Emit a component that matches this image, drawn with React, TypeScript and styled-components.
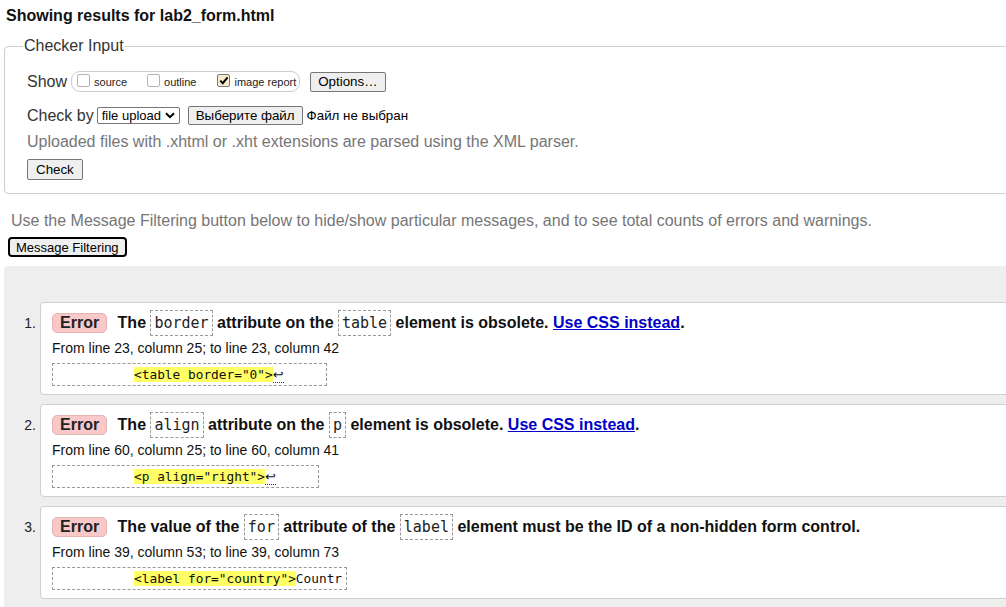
import React from "react";
import styled, { createGlobalStyle } from "styled-components";

const Global = createGlobalStyle`
  html, body { margin: 0; padding: 0; overflow: hidden; background: #fff; }
  body { font-family: "Liberation Sans", Arial, sans-serif; color: #000; }
`;

const Page = styled.div`
  width: 1060px;
  padding: 6px 0 0 4px;
  display: flex;
  flex-direction: column;
`;

const Title = styled.h2`
  margin: 0;
  padding-left: 2px;
  font-size: 16px;
  line-height: 19px;
  font-weight: bold;
  color: #111;
`;

const Fieldset = styled.fieldset`
  margin: 12px 0 0 0;
  padding: 0 0 13px 22px;
  border: 1px solid #cfcfcf;
  border-radius: 4px;
  min-width: 0;
`;

const Legend = styled.legend`
  margin-left: -4px;
  padding: 0 1px;
  font-size: 16px;
  line-height: 18px;
  color: #333;
`;

const FormBody = styled.div`
  display: flex;
  flex-direction: column;
  align-items: flex-start;
`;

const Row = styled.div<{ $top: number; $h: number }>`
  display: flex;
  align-items: center;
  margin-top: ${(p) => p.$top}px;
  height: ${(p) => p.$h}px;
`;

const RowLabel = styled.span<{ $gap: number }>`
  font-size: 16px;
  color: #333;
  margin-right: ${(p) => p.$gap}px;
`;

const Pill = styled.span`
  display: inline-flex;
  align-items: center;
  height: 19px;
  border: 1px solid #ccc;
  border-radius: 9px;
  padding: 0 3px 0 5px;
  margin-right: 10px;
`;

const Option = styled.label<{ $gap: number }>`
  display: inline-flex;
  align-items: center;
  margin-right: ${(p) => p.$gap}px;
  font-size: 11px;
  color: #222;
`;

const Box = styled.span<{ $checked?: boolean }>`
  box-sizing: border-box;
  width: 13px;
  height: 13px;
  margin: -3px 4px 0 0;
  border: 1px solid ${(p) => (p.$checked ? "#7a7a7a" : "#b4b4b4")};
  border-radius: 2px;
  background: ${(p) => (p.$checked ? "#f6eacb" : "#fff")};
  display: inline-flex;
  align-items: center;
  justify-content: center;
`;

const NativeButton = styled.button<{ $h: number; $px?: number }>`
  box-sizing: border-box;
  height: ${(p) => p.$h}px;
  padding: 0 ${(p) => p.$px ?? 7}px;
  font-family: "Liberation Sans", Arial, sans-serif;
  font-size: 13.33px;
  color: #000;
  background: #efefef;
  border: 1px solid #767676;
  border-radius: 2px;
`;

const SelectWrap = styled.span`
  position: relative;
  display: inline-flex;
  margin-right: 8px;
`;

const Select = styled.select`
  appearance: none;
  box-sizing: border-box;
  width: 83px;
  height: 17px;
  padding: 0 0 0 4px;
  font-family: "Liberation Sans", Arial, sans-serif;
  font-size: 13px;
  line-height: 15px;
  color: #000;
  background: #fff;
  border: 1px solid #767676;
  border-radius: 2px;
`;

const Chevron = styled.svg`
  position: absolute;
  right: 5px;
  top: 5px;
  pointer-events: none;
`;

const FileNote = styled.span`
  font-size: 13.33px;
  color: #000;
  margin-left: 4px;
`;

const Hint = styled.p<{ $top: number; $left?: number }>`
  margin: ${(p) => p.$top}px 0 0 ${(p) => p.$left ?? 0}px;
  font-size: 16px;
  line-height: 18px;
  color: #767676;
`;

const FilterButton = styled.button`
  align-self: flex-start;
  box-sizing: border-box;
  margin: 7px 0 0 4px;
  height: 20px;
  padding: 0 6px;
  font-family: "Liberation Sans", Arial, sans-serif;
  font-size: 13px;
  line-height: 15px;
  color: #000;
  background: #efefef;
  border: 2px solid #000;
  border-radius: 4px;
`;

const Results = styled.div`
  margin-top: 9px;
  background: #eeeeee;
  border-radius: 4px 0 0 0;
  padding: 36px 0 20px 0;
  display: flex;
  flex-direction: column;
  gap: 9px;
`;

const Item = styled.div`
  display: flex;
  align-items: baseline;
`;

const Num = styled.span`
  width: 36px;
  box-sizing: border-box;
  padding-right: 4px;
  text-align: right;
  font-size: 14px;
  color: #222;
`;

const Card = styled.div`
  flex: 1;
  background: #fff;
  border: 1px solid #cfcfcf;
  border-radius: 4px;
  padding: 7px 11px 8px 11px;
  display: flex;
  flex-direction: column;
  align-items: flex-start;
`;

const Message = styled.p`
  margin: 0;
  font-size: 16px;
  line-height: 26px;
  font-weight: bold;
  color: #111;
  white-space: nowrap;
`;

const Badge = styled.span`
  display: inline-block;
  box-sizing: border-box;
  height: 20px;
  line-height: 18px;
  padding: 0 7px;
  margin-right: 6px;
  background: #f9c9c9;
  border: 1px solid #e6b2b2;
  border-radius: 5px;
  color: #222;
`;

const Code = styled.code`
  font-family: "DejaVu Sans Mono", "Liberation Mono", monospace;
  font-size: 15px;
  font-weight: normal;
  color: #222;
  padding: 3px 3px;
  border: 1px dashed #999;
`;

const Link = styled.a`
  color: #0000c8;
  text-decoration: underline;
`;

const Location = styled.p`
  margin: 4px 0 0 0;
  font-size: 14px;
  line-height: 16px;
  color: #111;
`;

const Extract = styled.code`
  display: block;
  margin-top: 7px;
  padding: 2px 4px;
  border: 1px dashed #999;
  font-family: "DejaVu Sans Mono", "Liberation Mono", monospace;
  font-size: 12.8px;
  line-height: 17px;
  color: #111;
  white-space: pre;
`;

const Mark = styled.b`
  font-weight: normal;
  background: #ffff66;
`;

const Lf = styled.span`
  font-family: "DejaVu Sans", sans-serif;
  font-size: 13px;
  border-bottom: 1px dotted #333;
`;

const Check = () => (
  <svg width="10" height="9" viewBox="0 0 10 9">
    <path d="M1.3 4.6 L3.8 7.2 L8.6 1.4" fill="none" stroke="#000" strokeWidth="2" />
  </svg>
);

type Msg = {
  n: number;
  body: React.ReactNode;
  loc: string;
  extract: React.ReactNode;
};

const INDENT = "          ";

const messages: Msg[] = [
  {
    n: 1,
    body: (
      <>
        The <Code>border</Code> attribute on the <Code>table</Code> element is obsolete.{" "}
        <Link href="#">Use CSS instead</Link>.
      </>
    ),
    loc: "From line 23, column 25; to line 23, column 42",
    extract: (
      <>
        {INDENT}
        <Mark>{'<table border="0">'}</Mark>
        <Lf>↩</Lf>
        {"     "}
      </>
    ),
  },
  {
    n: 2,
    body: (
      <>
        The <Code>align</Code> attribute on the <Code>p</Code> element is obsolete.{" "}
        <Link href="#">Use CSS instead</Link>.
      </>
    ),
    loc: "From line 60, column 25; to line 60, column 41",
    extract: (
      <>
        {INDENT}
        <Mark>{'<p align="right">'}</Mark>
        <Lf>↩</Lf>
        {"     "}
      </>
    ),
  },
  {
    n: 3,
    body: (
      <>
        The value of the <Code>for</Code> attribute of the <Code>label</Code> element must be
        the ID of a non-hidden form control.
      </>
    ),
    loc: "From line 39, column 53; to line 39, column 73",
    extract: (
      <>
        {INDENT}
        <Mark>{'<label for="country">'}</Mark>
        Countr
      </>
    ),
  },
];

export default function App() {
  return (
    <>
      <Global />
      <Page>
        <Title>Showing results for lab2_form.html</Title>
        <Fieldset>
          <Legend>Checker Input</Legend>
          <FormBody>
            <Row $top={16} $h={21}>
              <RowLabel $gap={4}>Show</RowLabel>
              <Pill>
                <Option $gap={20}>
                  <Box />
                  source
                </Option>
                <Option $gap={21}>
                  <Box />
                  outline
                </Option>
                <Option $gap={0}>
                  <Box $checked>
                    <Check />
                  </Box>
                  image report
                </Option>
              </Pill>
              <NativeButton $h={20}>Options…</NativeButton>
            </Row>
            <Row $top={14} $h={19}>
              <RowLabel $gap={3}>Check by</RowLabel>
              <SelectWrap>
                <Select defaultValue="file">
                  <option value="file">file upload</option>
                </Select>
                <Chevron width="10" height="7" viewBox="0 0 10 7">
                  <path d="M1 1.2 L5 5.2 L9 1.2" fill="none" stroke="#000" strokeWidth="2" />
                </Chevron>
              </SelectWrap>
              <NativeButton $h={19} $px={7}>Выберите файл</NativeButton>
              <FileNote>Файл не выбран</FileNote>
            </Row>
            <Hint $top={8}>Uploaded files with .xhtml or .xht extensions are parsed using the XML parser.</Hint>
            <Row $top={8} $h={21}>
              <NativeButton $h={21} $px={8}>Check</NativeButton>
            </Row>
          </FormBody>
        </Fieldset>
        <Hint $top={18} $left={7}>
          Use the Message Filtering button below to hide/show particular messages, and to see total
          counts of errors and warnings.
        </Hint>
        <FilterButton>Message Filtering</FilterButton>
        <Results>
          {messages.map((m) => (
            <Item key={m.n}>
              <Num>{m.n}.</Num>
              <Card>
                <Message>
                  <Badge>Error</Badge> {m.body}
                </Message>
                <Location>{m.loc}</Location>
                <Extract>{m.extract}</Extract>
              </Card>
            </Item>
          ))}
        </Results>
      </Page>
    </>
  );
}
